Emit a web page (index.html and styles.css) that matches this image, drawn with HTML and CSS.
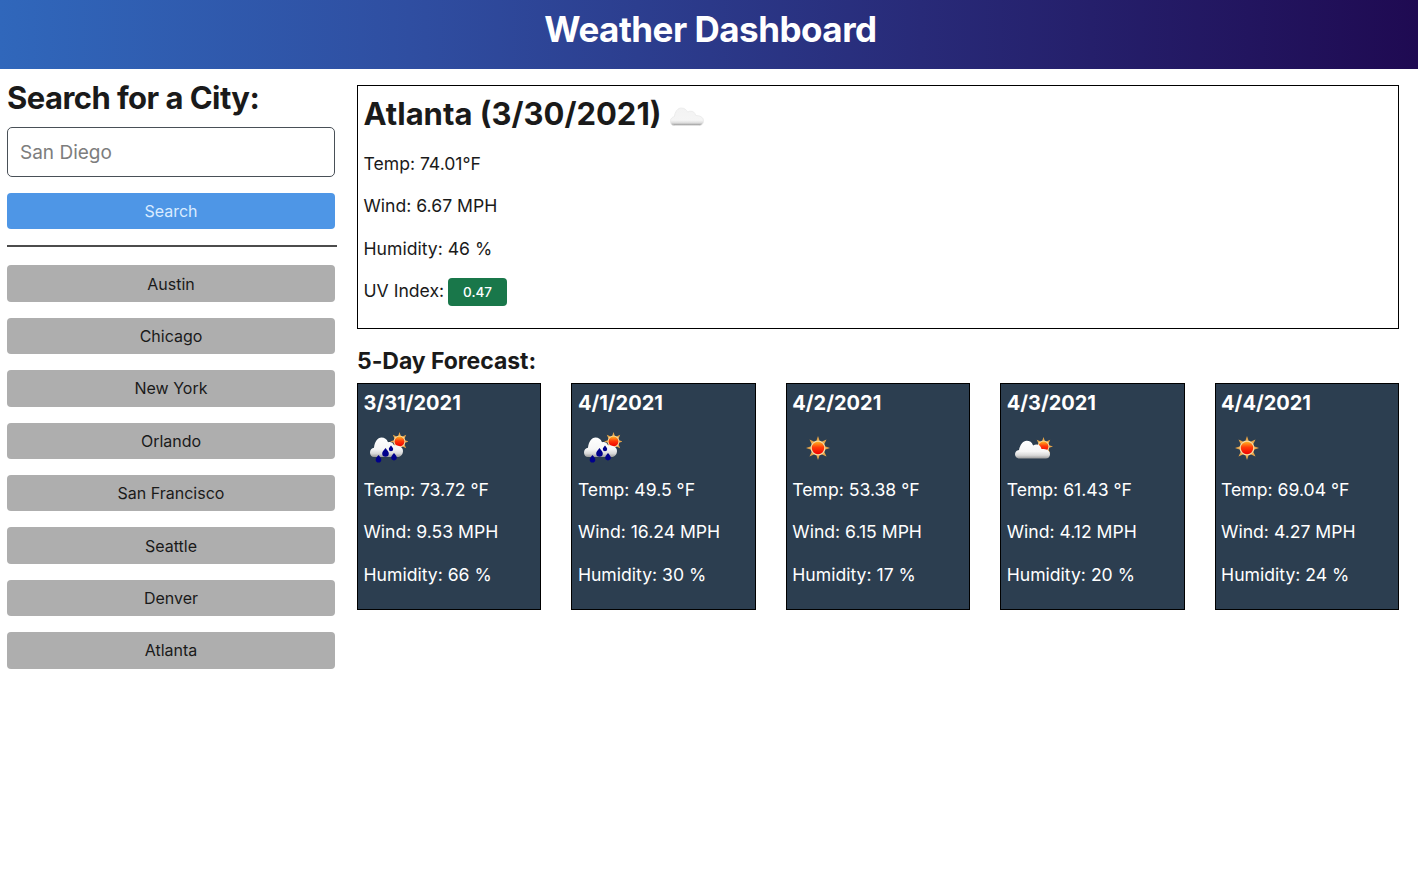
FILE: index.html
```html
<!DOCTYPE html>
<html lang="en">
<head>
<meta charset="utf-8">
<title>Weather Dashboard</title>
<link rel="stylesheet" href="styles.css">
</head>
<body>
<svg class="defs" width="0" height="0" aria-hidden="true">
  <defs>
    <linearGradient id="cloudG" x1="0" y1="0" x2="0" y2="1">
      <stop offset="0" stop-color="#ffffff"/>
      <stop offset="0.6" stop-color="#f6f6f6"/>
      <stop offset="0.82" stop-color="#d8d8d8"/>
      <stop offset="1" stop-color="#9a9a9a"/>
    </linearGradient>
    <linearGradient id="cloudLight" x1="0" y1="0" x2="0" y2="1">
      <stop offset="0" stop-color="#f3f3f3"/>
      <stop offset="0.7" stop-color="#f5f5f5"/>
      <stop offset="0.86" stop-color="#dcdcdc"/>
      <stop offset="1" stop-color="#8f8f8f"/>
    </linearGradient>
    <linearGradient id="sunG" x1="0" y1="0" x2="0" y2="1">
      <stop offset="0" stop-color="#ffb020"/>
      <stop offset="0.45" stop-color="#ff3a08"/>
      <stop offset="1" stop-color="#f00000"/>
    </linearGradient>
    <symbol id="rays" viewBox="0 0 24 24">
      <path fill="#e6a54a" d="M12 0l2 6h-4zM12 24l-2-6h4zM0 12l6-2v4zM24 12l-6 2v-4zM3.500 3.500l5.600 2.600-3 3zM20.500 20.500l-5.600-2.600 3-3zM20.500 3.500l-2.600 5.600-3-3zM3.500 20.500l2.600-5.600 3 3z"/>
      <circle cx="12" cy="12" r="7.500" fill="#f7d9a0"/>
      <circle cx="12" cy="12" r="6.200" fill="url(#sunG)"/>
    </symbol>
    <symbol id="cloud" viewBox="0 0 36 20">
      <path fill="url(#cloudLight)" stroke="#e8e8e8" stroke-width="0.800" d="M5 19.500C1.500 19.500.5 17.300.5 15c0-2.600 1.900-4.600 4.100-4.800C5.300 4.500 8.500 1 12 1c3 0 5.300 1.700 6.700 4.300 1-.6 2.200-.9 3.300-.9 2.600 0 4.500 1.500 5.300 4.600 4 0 8.200 1.400 8.200 5.800 0 2.500-1.700 4.700-4.300 4.700z"/>
    </symbol>
    <symbol id="rain" viewBox="0 0 38 32">
      <use href="#rays" x="20" y="0" width="19" height="19"/>
      <path fill="url(#cloudG)" d="M4 25C1.500 25 0 23 0 20.500c0-2.500 1.700-4.300 4-4.700C4.500 10 7.500 5.500 11.500 5.500c3 0 5.300 1.500 6.500 4.700 2.500-.8 4.700 0 6 3 3 0 9 .7 9 5.800 0 3.500-2.500 6-5 6z"/>
      <g fill="#00008b">
        <path d="M8.500 23c1.500 2 2.800 3 2.800 4.700a2.800 2.800 0 0 1-5.600 0c0-1.700 1.300-2.700 2.800-4.700z"/>
        <path d="M15.500 16c1.900 2.500 3.300 3.700 3.300 5.500a3.300 3.300 0 0 1-6.600 0c0-1.800 1.400-3 3.300-5.500z"/>
        <path d="M21 13.500c1.100 1.500 2.200 2.400 2.200 3.600a2.200 2.200 0 0 1-4.400 0c0-1.200 1.100-2.100 2.200-3.600z"/>
        <path d="M24 21c1.500 2 2.800 3 2.800 4.600a2.800 2.800 0 0 1-5.600 0c0-1.600 1.300-2.600 2.800-4.600z"/>
      </g>
    </symbol>
    <symbol id="cloudsun" viewBox="0 0 38 22">
      <use href="#rays" x="19" y="0" width="19" height="19"/>
      <path fill="url(#cloudG)" d="M4.500 21.500C1.800 21.500 0 19.600 0 17.300c0-2.300 1.700-4 4-4.300C5 8 8 3.800 11.700 3.800c3 0 5.200 1.400 6.400 4.700 1.100-.6 2.200-.9 3.400-.9 2.400 0 4.200 1.300 5 4.500 2.800-.3 8.500.5 8.500 5.100 0 2.800-1.900 4.300-4.200 4.300z"/>
    </symbol>
  </defs>
</svg>

<header class="page-header">
  <h1 class="page-title">Weather Dashboard</h1>
</header>

<div class="layout">
  <aside class="sidebar">
    <h2 class="search-title">Search for a City:</h2>
    <input class="city-input" type="text" placeholder="San Diego">
    <button class="btn btn-search" type="button">Search</button>
    <hr class="divider">
    <ul class="history">
      <li><button class="btn btn-city" type="button">Austin</button></li>
      <li><button class="btn btn-city" type="button">Chicago</button></li>
      <li><button class="btn btn-city" type="button">New York</button></li>
      <li><button class="btn btn-city" type="button">Orlando</button></li>
      <li><button class="btn btn-city" type="button">San Francisco</button></li>
      <li><button class="btn btn-city" type="button">Seattle</button></li>
      <li><button class="btn btn-city" type="button">Denver</button></li>
      <li><button class="btn btn-city" type="button">Atlanta</button></li>
    </ul>
  </aside>

  <main class="content">
    <section class="today">
      <h2 class="today-title">Atlanta (3/30/2021)
        <svg class="today-icon" viewBox="0 0 36 20"><use href="#cloud"/></svg>
      </h2>
      <p class="stat">Temp: 74.01°F</p>
      <p class="stat">Wind: 6.67 MPH</p>
      <p class="stat">Humidity: 46 %</p>
      <p class="stat">UV Index: <span class="uv">0.47</span></p>
    </section>

    <h3 class="forecast-title">5-Day Forecast:</h3>
    <div class="forecast">
      <article class="day">
        <h4 class="day-date">3/31/2021</h4>
        <div class="day-icon"><svg class="icon-rain" viewBox="0 0 38 32"><use href="#rain"/></svg></div>
        <p class="stat">Temp: 73.72 °F</p>
        <p class="stat">Wind: 9.53 MPH</p>
        <p class="stat">Humidity: 66 %</p>
      </article>
      <article class="day">
        <h4 class="day-date">4/1/2021</h4>
        <div class="day-icon"><svg class="icon-rain" viewBox="0 0 38 32"><use href="#rain"/></svg></div>
        <p class="stat">Temp: 49.5 °F</p>
        <p class="stat">Wind: 16.24 MPH</p>
        <p class="stat">Humidity: 30 %</p>
      </article>
      <article class="day">
        <h4 class="day-date">4/2/2021</h4>
        <div class="day-icon"><svg class="icon-sun" viewBox="0 0 24 24"><use href="#rays"/></svg></div>
        <p class="stat">Temp: 53.38 °F</p>
        <p class="stat">Wind: 6.15 MPH</p>
        <p class="stat">Humidity: 17 %</p>
      </article>
      <article class="day">
        <h4 class="day-date">4/3/2021</h4>
        <div class="day-icon"><svg class="icon-cloudsun" viewBox="0 0 38 22"><use href="#cloudsun"/></svg></div>
        <p class="stat">Temp: 61.43 °F</p>
        <p class="stat">Wind: 4.12 MPH</p>
        <p class="stat">Humidity: 20 %</p>
      </article>
      <article class="day">
        <h4 class="day-date">4/4/2021</h4>
        <div class="day-icon"><svg class="icon-sun" viewBox="0 0 24 24"><use href="#rays"/></svg></div>
        <p class="stat">Temp: 69.04 °F</p>
        <p class="stat">Wind: 4.27 MPH</p>
        <p class="stat">Humidity: 24 %</p>
      </article>
    </div>
  </main>
</div>
</body>
</html>
```
FILE: styles.css
```css
* { box-sizing: border-box; }
html, body { margin: 0; padding: 0; }
body {
  font-family: Inter, "Liberation Sans", sans-serif;
  color: #1a1a1a;
  background: #fff;
  font-size: 16px;
}
.defs { display: block; height: 0; width: 0; overflow: hidden; }

.page-header {
  height: 69px;
  background: linear-gradient(90deg, #3067bb 0%, #2f4da0 30%, #282a78 65%, #1f0a52 100%);
  padding: 7px 0 0 3px;
  text-align: center;
}
.page-title {
  margin: 0;
  color: #fff;
  font-size: 35px;
  font-weight: 700;
  line-height: 45px;
  letter-spacing: -0.5px;
}

.layout {
  display: grid;
  grid-template-columns: 330px 1042px;
  column-gap: 20px;
  padding: 0 19px 0 7px;
}

.search-title {
  margin: 9px 0 9px;
  font-size: 31px;
  font-weight: 700;
  line-height: 40px;
  letter-spacing: -0.55px;
}
.city-input {
  display: block;
  width: 328px;
  height: 50px;
  padding: 0 12px;
  font: 19px Inter, sans-serif;
  border: 1px solid #495057;
  border-radius: 5px;
  outline: none;
  background: #fff;
}
.city-input::placeholder { color: #7d7d7d; opacity: 1; }

.btn {
  display: block;
  width: 328px;
  height: 36.400px;
  border: 0;
  border-radius: 4px;
  font: 16px/24px Inter, sans-serif;
  padding: 0;
  text-align: center;
}
.btn-search { margin-top: 16px; background: #4e96e6; color: #d9ebff; }
.divider {
  width: 330px;
  margin: 16px 0 18px;
  border: 0;
  border-top: 2px solid #4c4c4c;
}
.history { list-style: none; margin: 0; padding: 0; display: flex; flex-direction: column; gap: 16px; }
.btn-city { background: #aeaeae; color: #1a1a1a; }

.content { padding-top: 16px; }
.today {
  height: 244px;
  border: 1px solid #000;
  padding: 7px 5.500px 6px;
}
.today-title {
  margin: 0 0 16px;
  font-size: 31px;
  font-weight: 700;
  line-height: 42px;
  white-space: nowrap;
}
.today-icon { width: 34px; height: 19px; vertical-align: -1px; margin-left: 1px; }
.stat {
  margin: 0 0 16px;
  font-size: 17.600px;
  line-height: 26.400px;
}
.uv {
  display: inline-block;
  width: 59px;
  height: 28px;
  margin-left: -1px;
  border-radius: 4px;
  background: #19774a;
  color: #fff;
  font-size: 13.500px;
  font-weight: 500;
  line-height: 28px;
  text-align: center;
  vertical-align: baseline;
}

.forecast-title {
  margin: 17px 0 7px;
  font-size: 23px;
  font-weight: 700;
  line-height: 30px;
  letter-spacing: -0.05px;
}
.forecast {
  display: grid;
  grid-template-columns: repeat(5, 1fr);
  column-gap: 30px;
}
.day {
  height: 227px;
  background: #2c3e50;
  border: 1px solid #000;
  padding: 6px 5.500px;
  color: #fff;
}
.day-date {
  margin: 0;
  font-size: 20px;
  font-weight: 700;
  line-height: 26px;
}
.day-icon {
  height: 61px;
  display: flex;
  align-items: center;
  padding-left: 6px;
  padding-top: 2px;
}
.icon-rain { width: 38px; height: 32px; }
.icon-sun { width: 24px; height: 24px; margin-left: 8px; }
.icon-cloudsun { width: 38px; height: 22px; margin-left: 2px; }
```
